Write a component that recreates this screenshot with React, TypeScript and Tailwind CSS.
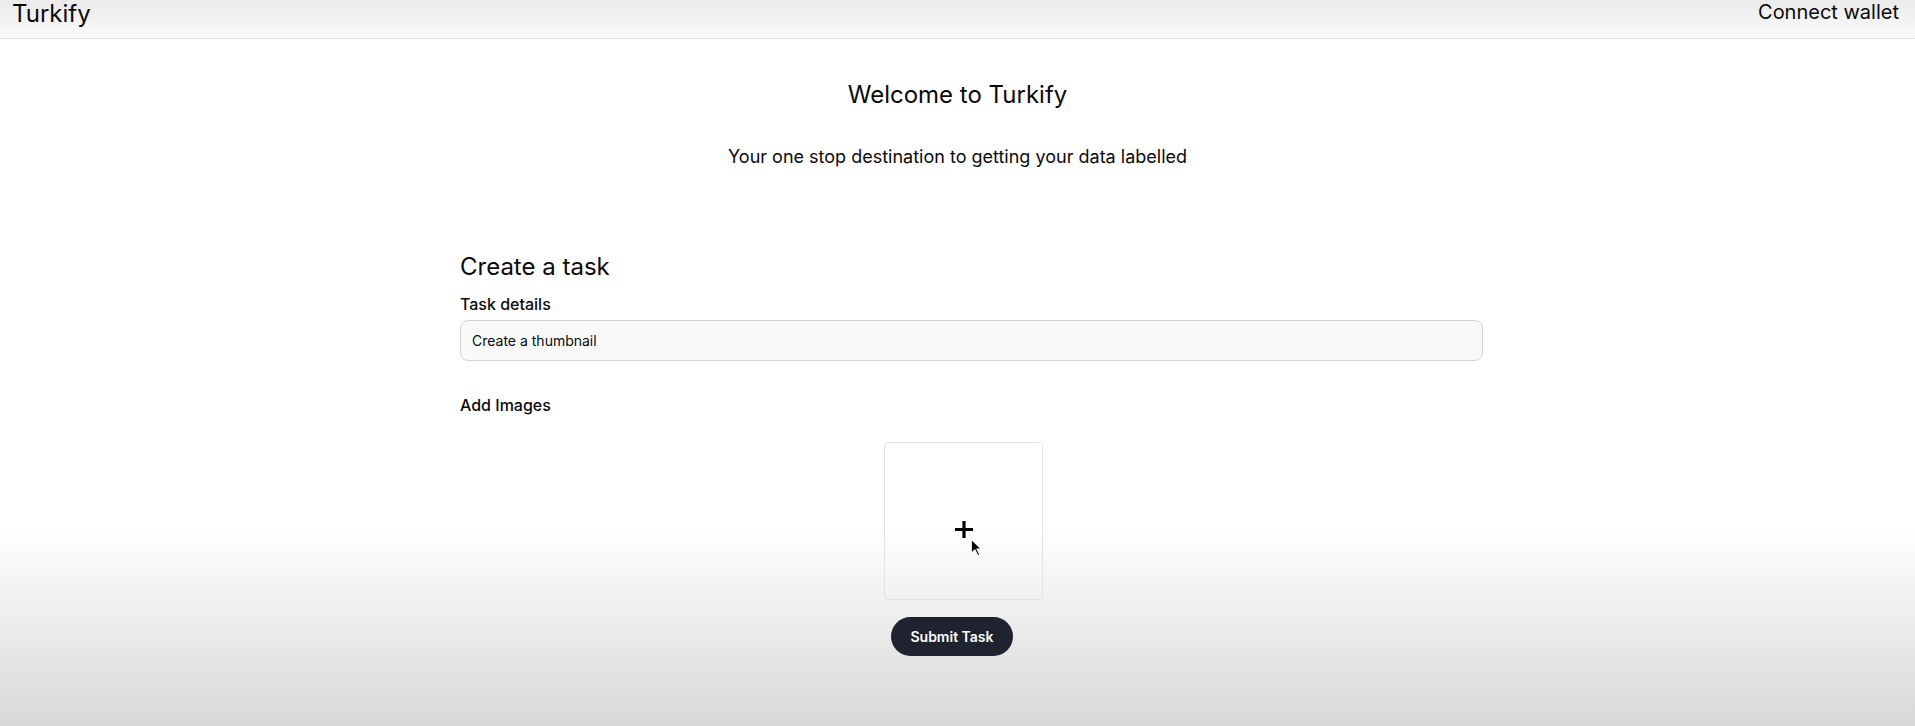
import React, { useState } from 'react';

const Navbar = () => {
  return (
    <div className="h-[39px] flex justify-between items-start border-b border-[#e3e3e3] bg-[linear-gradient(to_bottom,#ebebeb,#fafafa)]">
      <div className="pl-3 text-2xl leading-7">Turkify</div>
      <div className="pr-4 text-xl leading-[24px]">Connect wallet</div>
    </div>
  );
};

const UploadBox = () => {
  return (
    <div className="relative mt-[25px] ml-[424px] w-[159px] h-[158px] border border-[#e2e2e2] rounded-sm flex items-center justify-center">
      <svg width="18" height="17" viewBox="0 0 18 17" className="mt-4">
        <path d="M9 0v17M0 8.5h18" stroke="#000" strokeWidth="3.2" />
      </svg>
      {/* mouse pointer over the box */}
      <svg
        width="12"
        height="19"
        viewBox="0 0 10 16"
        className="absolute left-[85px] top-[95px]"
      >
        <path
          d="M1 1v12l3-3 2.5 5 1.8-.9L5.8 9.3H9.5z"
          fill="#000"
          stroke="#fff"
          strokeWidth="1"
          strokeLinejoin="round"
        />
      </svg>
    </div>
  );
};

export default function App() {
  const [taskDetails, setTaskDetails] = useState('Create a thumbnail');

  return (
    <div className="h-[726px] overflow-hidden font-['Inter',sans-serif] text-[#0a0a0a] bg-[linear-gradient(to_bottom,#ffffff_0,#ffffff_527px,#d8d8d8_726px)]">
      <Navbar />

      <div className="pt-[40px] text-2xl leading-8 flex justify-center">Welcome to Turkify</div>
      <div className="mt-8 text-lg leading-7 flex justify-center">
        Your one stop destination to getting your data labelled
      </div>

      <div className="ml-[460px] w-[1023px] mt-[80px]">
        <div className="text-2xl leading-8">Create a task</div>

        <div className="mt-[9px] text-base leading-6 font-medium">Task details</div>
        <input
          type="text"
          value={taskDetails}
          onChange={(e) => setTaskDetails(e.target.value)}
          className="mt-1 w-full h-[41px] px-[11px] bg-[#f9f9f9] border border-[#d4d4d4] rounded-lg text-sm text-[#0a0a0a] outline-none"
        />

        <div className="mt-8 text-base leading-6 font-medium">Add Images</div>

        <UploadBox />

        <button
          type="button"
          className="mt-[17px] ml-[431px] w-[122px] h-[39px] rounded-full bg-[#1f2330] text-white text-sm font-semibold"
        >
          Submit Task
        </button>
      </div>
    </div>
  );
}
